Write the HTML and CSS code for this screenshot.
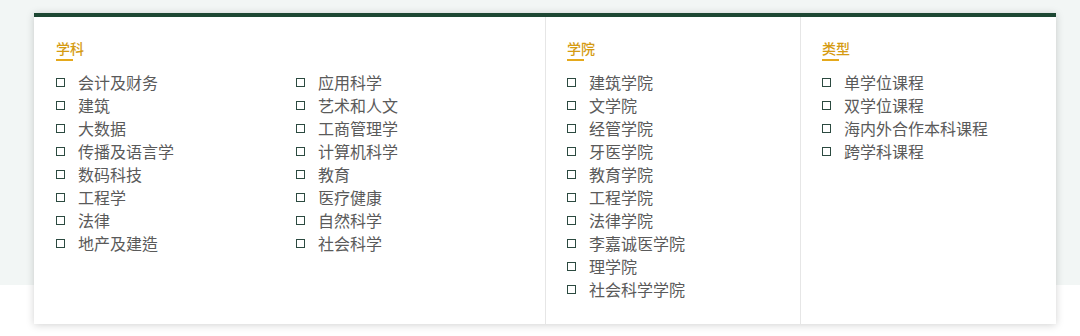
FILE: index.html
```html
<!DOCTYPE html>
<html lang="zh-Hant">
<head>
    <meta charset="UTF-8">
    <meta name="viewport" content="width=device-width, initial-scale=1.0">
    <title>课程筛选</title>
    <link rel="stylesheet" href="styles.css">
</head>
<body>
    <div class="page">
        <div class="filter-panel">
            <!-- 学科 -->
            <section class="filter-col col-wide">
                <h2 class="filter-title">学科</h2>
                <div class="sub-grid">
                    <ul class="check-list">
                        <li><span class="box"></span>会计及财务</li>
                        <li><span class="box"></span>建筑</li>
                        <li><span class="box"></span>大数据</li>
                        <li><span class="box"></span>传播及语言学</li>
                        <li><span class="box"></span>数码科技</li>
                        <li><span class="box"></span>工程学</li>
                        <li><span class="box"></span>法律</li>
                        <li><span class="box"></span>地产及建造</li>
                    </ul>
                    <ul class="check-list">
                        <li><span class="box"></span>应用科学</li>
                        <li><span class="box"></span>艺术和人文</li>
                        <li><span class="box"></span>工商管理学</li>
                        <li><span class="box"></span>计算机科学</li>
                        <li><span class="box"></span>教育</li>
                        <li><span class="box"></span>医疗健康</li>
                        <li><span class="box"></span>自然科学</li>
                        <li><span class="box"></span>社会科学</li>
                    </ul>
                </div>
            </section>

            <!-- 学院 -->
            <section class="filter-col">
                <h2 class="filter-title">学院</h2>
                <ul class="check-list">
                    <li><span class="box"></span>建筑学院</li>
                    <li><span class="box"></span>文学院</li>
                    <li><span class="box"></span>经管学院</li>
                    <li><span class="box"></span>牙医学院</li>
                    <li><span class="box"></span>教育学院</li>
                    <li><span class="box"></span>工程学院</li>
                    <li><span class="box"></span>法律学院</li>
                    <li><span class="box"></span>李嘉诚医学院</li>
                    <li><span class="box"></span>理学院</li>
                    <li><span class="box"></span>社会科学学院</li>
                </ul>
            </section>

            <!-- 类型 -->
            <section class="filter-col">
                <h2 class="filter-title">类型</h2>
                <ul class="check-list">
                    <li><span class="box"></span>单学位课程</li>
                    <li><span class="box"></span>双学位课程</li>
                    <li><span class="box"></span>海内外合作本科课程</li>
                    <li><span class="box"></span>跨学科课程</li>
                </ul>
            </section>
        </div>
    </div>
</body>
</html>
```

FILE: styles.css
```css
body {
    margin: 0;
    padding: 0;
    background-color: #ffffff;
    font-family: "Noto Sans CJK SC", "Noto Sans", sans-serif;
    color: #5a5a5a;
}

.page {
    padding: 13px 24px 11px 34px;
    background: linear-gradient(to bottom, #f2f6f5 0, #f2f6f5 285px, #ffffff 285px);
}

.filter-panel {
    display: grid;
    grid-template-columns: 511px 255px 1fr;
    background-color: #ffffff;
    border-top: 4px solid #1d4733;
    box-shadow: 0 1px 8px rgba(0, 0, 0, 0.18);
}

.filter-col {
    padding: 21px 22px 23px 22px;
}

.filter-col + .filter-col {
    border-left: 1px solid #e6e6e6;
    padding-left: 21px;
}

.filter-title {
    position: relative;
    margin: 0 0 10px 0;
    padding-bottom: 3px;
    font-size: 14px;
    line-height: 20px;
    font-weight: 500;
    color: #d59b12;
}

.filter-title::after {
    content: "";
    position: absolute;
    left: 0;
    bottom: 0;
    width: 17px;
    height: 2px;
    background-color: #e5a91c;
}

.sub-grid {
    display: grid;
    grid-template-columns: 240px 240px;
}

.check-list {
    list-style: none;
    margin: 0;
    padding: 0;
}

.check-list li {
    display: flex;
    align-items: center;
    gap: 13px;
    font-size: 16px;
    line-height: 23px;
    color: #5a5a5a;
}

.box {
    flex: none;
    width: 7px;
    height: 7px;
    border: 1.5px solid #2c4a40;
}
```
